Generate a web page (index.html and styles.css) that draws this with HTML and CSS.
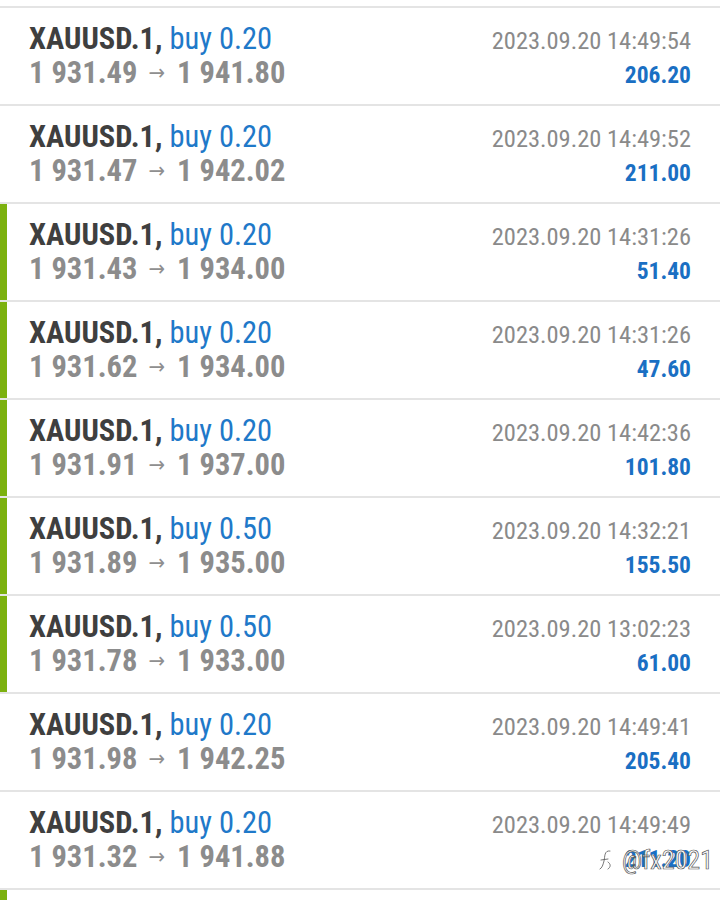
FILE: index.html
```html
<!DOCTYPE html>
<html lang="en">
  <head>
    <meta charset="UTF-8" />
    <meta name="viewport" content="width=device-width, initial-scale=1.0" />
    <title>History</title>
    <link rel="stylesheet" href="styles.css">
  </head>
  <body>
    <ul class="trades">
      <li class="trade">
        <div class="trade-main">
          <div class="trade-title"><b class="symbol">XAUUSD.1,</b> <span class="side">buy 0.20</span></div>
          <div class="trade-prices">1 931.49 <span class="arrow">→</span> 1 941.80</div>
        </div>
        <div class="trade-info">
          <div class="trade-time">2023.09.20 14:49:54</div>
          <div class="trade-profit">206.20</div>
        </div>
      </li>
      <li class="trade">
        <div class="trade-main">
          <div class="trade-title"><b class="symbol">XAUUSD.1,</b> <span class="side">buy 0.20</span></div>
          <div class="trade-prices">1 931.47 <span class="arrow">→</span> 1 942.02</div>
        </div>
        <div class="trade-info">
          <div class="trade-time">2023.09.20 14:49:52</div>
          <div class="trade-profit">211.00</div>
        </div>
      </li>
      <li class="trade marked">
        <div class="trade-main">
          <div class="trade-title"><b class="symbol">XAUUSD.1,</b> <span class="side">buy 0.20</span></div>
          <div class="trade-prices">1 931.43 <span class="arrow">→</span> 1 934.00</div>
        </div>
        <div class="trade-info">
          <div class="trade-time">2023.09.20 14:31:26</div>
          <div class="trade-profit">51.40</div>
        </div>
      </li>
      <li class="trade marked">
        <div class="trade-main">
          <div class="trade-title"><b class="symbol">XAUUSD.1,</b> <span class="side">buy 0.20</span></div>
          <div class="trade-prices">1 931.62 <span class="arrow">→</span> 1 934.00</div>
        </div>
        <div class="trade-info">
          <div class="trade-time">2023.09.20 14:31:26</div>
          <div class="trade-profit">47.60</div>
        </div>
      </li>
      <li class="trade marked">
        <div class="trade-main">
          <div class="trade-title"><b class="symbol">XAUUSD.1,</b> <span class="side">buy 0.20</span></div>
          <div class="trade-prices">1 931.91 <span class="arrow">→</span> 1 937.00</div>
        </div>
        <div class="trade-info">
          <div class="trade-time">2023.09.20 14:42:36</div>
          <div class="trade-profit">101.80</div>
        </div>
      </li>
      <li class="trade marked">
        <div class="trade-main">
          <div class="trade-title"><b class="symbol">XAUUSD.1,</b> <span class="side">buy 0.50</span></div>
          <div class="trade-prices">1 931.89 <span class="arrow">→</span> 1 935.00</div>
        </div>
        <div class="trade-info">
          <div class="trade-time">2023.09.20 14:32:21</div>
          <div class="trade-profit">155.50</div>
        </div>
      </li>
      <li class="trade marked">
        <div class="trade-main">
          <div class="trade-title"><b class="symbol">XAUUSD.1,</b> <span class="side">buy 0.50</span></div>
          <div class="trade-prices">1 931.78 <span class="arrow">→</span> 1 933.00</div>
        </div>
        <div class="trade-info">
          <div class="trade-time">2023.09.20 13:02:23</div>
          <div class="trade-profit">61.00</div>
        </div>
      </li>
      <li class="trade">
        <div class="trade-main">
          <div class="trade-title"><b class="symbol">XAUUSD.1,</b> <span class="side">buy 0.20</span></div>
          <div class="trade-prices">1 931.98 <span class="arrow">→</span> 1 942.25</div>
        </div>
        <div class="trade-info">
          <div class="trade-time">2023.09.20 14:49:41</div>
          <div class="trade-profit">205.40</div>
        </div>
      </li>
      <li class="trade">
        <div class="trade-main">
          <div class="trade-title"><b class="symbol">XAUUSD.1,</b> <span class="side">buy 0.20</span></div>
          <div class="trade-prices">1 931.32 <span class="arrow">→</span> 1 941.88</div>
        </div>
        <div class="trade-info">
          <div class="trade-time">2023.09.20 14:49:49</div>
          <div class="trade-profit">211.20</div>
        </div>
      </li>
      <!-- next row, only its top edge is on screen -->
      <li class="trade trade-cut marked"></li>
    </ul>

    <!-- watermark over the screenshot -->
    <div class="watermark">
      <svg width="16" height="24" viewBox="0 0 16 24">
        <path d="M12 3 C6 2 7 9 6 13 C5 17 4 20 2 21 M3 12 L10 11 M10 14 C13 16 13 19 10 21" fill="none" stroke="#fff" stroke-width="2.4" stroke-linecap="round" />
        <path d="M12 3 C6 2 7 9 6 13 C5 17 4 20 2 21 M3 12 L10 11 M10 14 C13 16 13 19 10 21" fill="none" stroke="#555" stroke-width="0.8" stroke-linecap="round" />
      </svg>
      <span>@fx2021</span>
    </div>
  </body>
</html>
```

FILE: styles.css
```css
html,
body {
  margin: 0;
  background: #fff;
}

body {
  font-family: Roboto, "Liberation Sans", sans-serif;
  font-stretch: 75%;
  position: relative;
  height: 900px;
  overflow: hidden;
}

.trades {
  list-style: none;
  margin: 6px 0 0;
  padding: 0;
}

.trade {
  display: flex;
  justify-content: space-between;
  height: 96px;
  padding: 0 29px;
  border-top: 2px solid #e4e4e4;
}

.trade.marked {
  box-shadow: inset 7px 0 0 #7cb10f;
}

.trade-cut {
  height: 10px;
}

.trade-main {
  padding-top: 14px;
  line-height: 34px;
  font-size: 30.5px;
}

.trade-title {
  white-space: nowrap;
}

.symbol {
  color: #3f3f3f;
  font-weight: 700;
}

.side {
  color: #1f79c9;
}

.trade-prices {
  color: #8c8c8c;
  font-weight: 700;
  white-space: nowrap;
}

.arrow {
  display: inline-block;
  margin: 0 5px 0 4px;
  font-family: "DejaVu Sans", sans-serif;
  font-size: 22px;
  font-weight: 400;
  color: #8f8f8f;
  vertical-align: 3px;
}

.trade-info {
  padding-top: 16px;
  text-align: right;
  line-height: 34px;
}

.trade-time {
  font-size: 24.5px;
  color: #8a8a8a;
  white-space: nowrap;
}

.trade-profit {
  font-size: 23.5px;
  font-weight: 700;
  color: #1a6fc3;
}

.watermark {
  position: absolute;
  top: 845px;
  left: 598px;
  display: flex;
  align-items: center;
  gap: 8px;
  font-size: 26px;
  color: #fff;
  -webkit-text-stroke: 0.7px #555;
}
```
